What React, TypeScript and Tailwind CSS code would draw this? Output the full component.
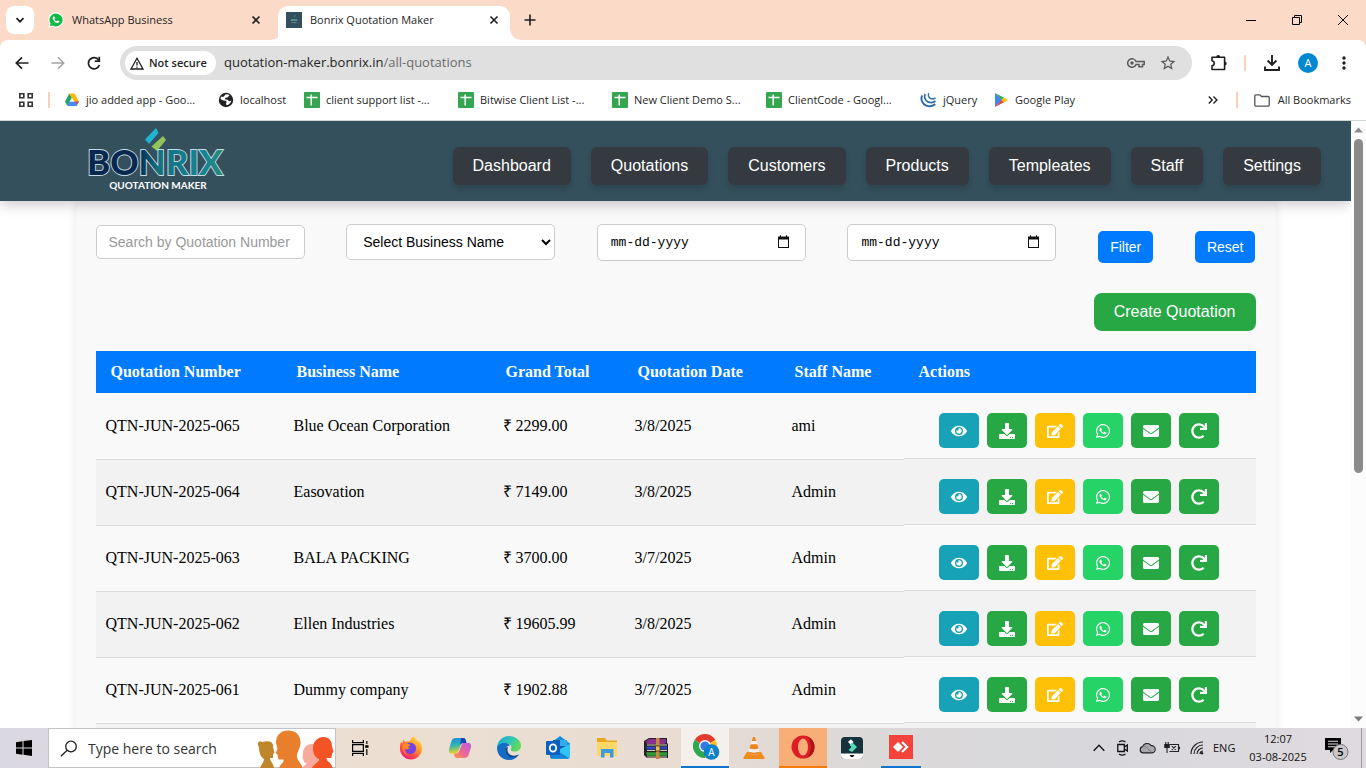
import React from "react";
import { FaEye, FaDownload, FaEdit, FaWhatsapp, FaEnvelope, FaRedo } from "react-icons/fa";
import { MdStarBorder, MdMoreVert } from "react-icons/md";

const uiFont = "font-['Open_Sans','Noto_Sans',sans-serif]";

/* ---------- Browser chrome icons ---------- */

function WhatsAppBadge() {
  return (
    <svg width="16" height="16" viewBox="0 0 16 16" aria-hidden="true">
      <path d="M8 .3A7.6 7.6 0 0 0 1.5 11.9L.3 15.7l4-1.1A7.6 7.6 0 1 0 8 .3z" fill="#fff" />
      <path d="M8 1.4a6.5 6.5 0 0 0-5.4 10.1l-.8 2.7 2.8-.8A6.5 6.5 0 1 0 8 1.4z" fill="#12b848" />
      <path d="M5.6 4.4c.3-.2.7-.1.8.2l.6 1.4-.6.9c.5 1.1 1.2 1.8 2.4 2.4l.8-.8 1.7.8c.3 1.1-.9 1.8-1.9 1.7C6.900 10.600 4.800 8.200 4.700 6.200c0-.7.4-1.400.9-1.800z" fill="#fff" />
    </svg>
  );
}

function SiteBadge() {
  return (
    <svg width="16" height="16" viewBox="0 0 16 16" aria-hidden="true">
      <rect width="16" height="16" fill="#34505d" />
      <path d="M8 4.500l1.500-1M5 7.500h6" stroke="#3f9aa5" strokeWidth="1" />
      <path d="M4.500 8.500h7M5.500 10.500h5" stroke="#6f909b" strokeWidth=".8" />
    </svg>
  );
}

function CloseIcon() {
  return (
    <svg width="10" height="10" viewBox="0 0 10 10" aria-hidden="true">
      <path d="M1.500 1.500l7 7M8.500 1.500l-7 7" stroke="#1f1f1f" strokeWidth="1.600" />
    </svg>
  );
}

function DriveIcon() {
  return (
    <svg width="16" height="16" viewBox="0 0 16 16" aria-hidden="true">
      <path d="M5.400 1.500L1 9.500l2.200 4.300 4.800-8.300z" fill="#1fa463" />
      <path d="M5.400 1.500h5.200L15 9.500h-5z" fill="#ffba00" />
      <path d="M5.400 9.500H15l-2.300 4.500H3.200z" fill="#4688f4" />
      <path d="M10.500 9.500H15l-1.500 2.800z" fill="#ea4335" />
      <path d="M8 6.200l2 3.300H6z" fill="#fff" />
    </svg>
  );
}

function GlobeIcon() {
  return (
    <svg width="16" height="16" viewBox="0 0 16 16" aria-hidden="true">
      <circle cx="8" cy="8" r="7.200" fill="#202124" />
      <path d="M7.500 2.500c1.500-.6 3 0 4 .8L9.500 5.500l-2 .3-.8 1.400 2.800.5 1.600 1.600c1 0 1.700-.2 2.300-.8-.4 2.300-2.400 4.400-4.700 4.700l-.9-1.700 1-1.300-1-1.400-2.500-.3L2.500 7c0-1 .5-2 1-2.500l1.700.5z" fill="#fff" />
    </svg>
  );
}

function SheetIcon() {
  return (
    <svg width="16" height="16" viewBox="0 0 16 16" aria-hidden="true">
      <rect width="16" height="16" rx="1" fill="#34a550" />
      <path d="M2.500 5.500h11M7.200 2.500v11" stroke="#fff" strokeWidth="1.500" />
    </svg>
  );
}

function JqueryIcon() {
  return (
    <svg width="17" height="16" viewBox="0 0 17 16" fill="none" stroke="#2b6ca8" aria-hidden="true">
      <path d="M2.200 3.500c-2 4 .2 8.500 4 10.100 3 1.200 6.500.7 9-1.600" strokeWidth="1.900" />
      <path d="M5.200 2c-1.500 3-.2 6.500 2.800 7.900 2.500 1.100 5.200.8 7.500-.9" strokeWidth="1.700" />
      <path d="M8.800 1.300c-.8 1.700-.3 4 1.500 5 1.700.9 3.500.8 5.200-.5" strokeWidth="1.500" />
    </svg>
  );
}

function PlayIcon() {
  return (
    <svg width="16" height="16" viewBox="0 0 16 16" aria-hidden="true">
      <path d="M2 1v14l7-7z" fill="#4285f4" />
      <path d="M2 1l9 4.800L8.500 8z" fill="#34a853" />
      <path d="M2 15l9-4.800L8.500 8z" fill="#ea4335" />
      <path d="M11 5.600L15 8l-4 2.400L8.300 8z" fill="#fbbc04" />
    </svg>
  );
}

const bookmarks: { label: string; icon: React.ReactNode; width: string }[] = [
  { label: "jio added app - Goo...", icon: <DriveIcon />, width: "w-[154px]" },
  { label: "localhost", icon: <GlobeIcon />, width: "w-[86px]" },
  { label: "client support list -...", icon: <SheetIcon />, width: "w-[154px]" },
  { label: "Bitwise Client List -...", icon: <SheetIcon />, width: "w-[154px]" },
  { label: "New Client Demo S...", icon: <SheetIcon />, width: "w-[154px]" },
  { label: "ClientCode - Googl...", icon: <SheetIcon />, width: "w-[154px]" },
  { label: "jQuery", icon: <JqueryIcon />, width: "w-[73px]" },
  { label: "Google Play", icon: <PlayIcon />, width: "w-[92px]" },
];

function TabStrip() {
  return (
    <div className="flex h-10 shrink-0 items-end bg-[#fcdac8] text-[#1f1f1f]">
      <button aria-label="Search tabs" className="mb-[6px] ml-[6px] flex h-7 w-7 items-center justify-center rounded-lg bg-white">
        <svg width="10" height="10" viewBox="0 0 10 10" fill="none" stroke="#1f1f1f" strokeWidth="1.700">
          <path d="M1.500 3.200L5 6.700l3.500-3.500" />
        </svg>
      </button>
      <div className="flex h-[34px] w-[238px] items-center gap-2 pb-[6px] pl-[14px] pr-2">
        <WhatsAppBadge />
        <span className="flex-1 text-[11px]">WhatsApp Business</span>
        <button aria-label="Close tab" className="flex h-4 w-4 items-center justify-center">
          <CloseIcon />
        </button>
      </div>
      <div className="h-[10px] w-[10px] bg-[radial-gradient(circle_at_0_0,#fcdac8_9px,#fff_10px)]" />
      <div className="-ml-1 flex h-[34px] w-[232px] items-center gap-2 rounded-t-[10px] bg-white px-2 pb-[6px]">
        <SiteBadge />
        <span className="flex-1 text-[11px]">Bonrix Quotation Maker</span>
        <button aria-label="Close tab" className="flex h-4 w-4 items-center justify-center">
          <CloseIcon />
        </button>
      </div>
      <div className="h-[10px] w-[10px] bg-[radial-gradient(circle_at_100%_0,#fcdac8_9px,#fff_10px)]" />
      <button aria-label="New tab" className="mb-[10px] flex h-5 w-5 items-center justify-center">
        <svg width="12" height="12" viewBox="0 0 12 12" stroke="#1f1f1f" strokeWidth="1.600">
          <path d="M6 .5v11M.5 6h11" />
        </svg>
      </button>
      <div className="ml-auto flex h-10">
        <button aria-label="Minimize" className="flex w-[46px] items-center justify-center">
          <svg width="10" height="10" viewBox="0 0 10 10"><path d="M0 5.500h10" stroke="#000" /></svg>
        </button>
        <button aria-label="Restore" className="flex w-[46px] items-center justify-center">
          <svg width="10" height="10" viewBox="0 0 10 10" fill="none" stroke="#000">
            <path d="M.5 2.500h7v7h-7zM2.500 2.500v-2h7v7h-2" />
          </svg>
        </button>
        <button aria-label="Close" className="flex w-[46px] items-center justify-center">
          <svg width="10" height="10" viewBox="0 0 10 10" stroke="#000"><path d="M0 0l10 10M10 0L0 10" /></svg>
        </button>
      </div>
    </div>
  );
}

function AddressBar() {
  return (
    <div className="flex h-[46px] items-center px-[14px]">
      <button aria-label="Back" className="flex h-4 w-4 items-center justify-center">
        <svg width="14" height="14" viewBox="0 0 14 14" fill="none" stroke="#1f1f1f" strokeWidth="1.700">
          <path d="M13.500 7H1.500M7 1.300L1.300 7 7 12.700" />
        </svg>
      </button>
      <button aria-label="Forward" className="ml-5 flex h-4 w-4 items-center justify-center">
        <svg width="14" height="14" viewBox="0 0 14 14" fill="none" stroke="#a3a3a3" strokeWidth="1.500">
          <path d="M.5 7h12M7 1.300L12.700 7 7 12.700" />
        </svg>
      </button>
      <button aria-label="Reload" className="ml-5 flex h-4 w-4 items-center justify-center">
        <svg width="14" height="14" viewBox="0 0 14 14" fill="none" stroke="#1f1f1f" strokeWidth="1.700">
          <path d="M12.400 9A5.600 5.600 0 1 1 11.700 4.100" />
          <path d="M12.300.7v4.500H7.800" />
        </svg>
      </button>
      <div className="ml-[18px] flex h-[34px] flex-1 items-center rounded-full bg-[#e0e0e0] pl-[5px] pr-[15px]">
        <button className="flex h-6 w-[91px] items-center gap-[5px] rounded-full bg-white pl-[5px] text-[#1f1f1f]">
          <svg width="14" height="13" viewBox="0 0 14 13" fill="none" stroke="#1f1f1f" strokeWidth="1.300">
            <path d="M7 1.300L13 12H1z" />
            <path d="M7 5v3.500M7 9.500v1.300" />
          </svg>
          <span className="text-[11px] font-semibold whitespace-nowrap">Not secure</span>
        </button>
        <div className="ml-2 flex-1 text-[13px] text-[#1f1f1f]">
          quotation-maker.bonrix.in<span className="text-[#6a6a6a]">/all-quotations</span>
        </div>
        <button aria-label="Passwords">
          <svg width="18" height="12" viewBox="0 0 18 12" fill="none" stroke="#5a5a5a" strokeWidth="1.500">
            <path d="M9 4.500A4.300 4.300 0 1 0 9 7.500h3v2.300h3.500V7.500H17.200v-3z" />
            <circle cx="5" cy="6" r="1" fill="#5a5a5a" />
          </svg>
        </button>
        <button aria-label="Bookmark this tab" className="ml-[14px] text-[18px] text-[#555]">
          <MdStarBorder />
        </button>
      </div>
      <button aria-label="Extensions" className="ml-[18px]">
        <svg width="18" height="18" viewBox="0 0 18 18">
          <path d="M2 3.200h12.600v12.300H2v-3.600c3-.6 3-4.500 0-5.100z" fill="none" stroke="#1f1f1f" strokeWidth="1.600" strokeLinejoin="round" />
          <path d="M6.200 3a2 2 0 0 1 4 0zM14.700 7.400a2 2 0 0 1 0 4z" fill="#1f1f1f" />
        </svg>
      </button>
      <div className="ml-4 h-4 w-[2px] rounded bg-[#fcd0b8]" />
      <button aria-label="Downloads" className="ml-[18px]">
        <svg width="16" height="16" viewBox="0 0 16 16" fill="none" stroke="#1f1f1f" strokeWidth="1.900">
          <path d="M8 0v9.500M3.600 5.500L8 9.900l4.400-4.400M1 11.500V15h14v-3.500" />
        </svg>
      </button>
      <button aria-label="Profile" className="ml-[18px] flex h-5 w-5 items-center justify-center rounded-full bg-[#0288d1] text-[11px] text-white">
        A
      </button>
      <button aria-label="Chrome menu" className="-mr-[2px] ml-4 text-[20px] text-[#1f1f1f]">
        <MdMoreVert />
      </button>
    </div>
  );
}

function BookmarksBar() {
  return (
    <nav aria-label="Bookmarks" className="flex h-[34px] items-start pl-[19px] pr-[15px] pt-[6px] text-[11px] leading-4 text-[#1f1f1f]">
      <button aria-label="Apps" className="flex h-4 items-center">
        <svg width="14" height="14" viewBox="0 0 14 14" fill="none" stroke="#333" strokeWidth="1.600">
          <path d="M.8.8h4v4h-4zM9.200.8h4v4h-4zM.8 9.200h4v4h-4zM9.200 9.200h4v4h-4z" />
        </svg>
      </button>
      <div className="ml-[15px] h-4 w-[2px] bg-[#fcd0b8]" />
      <ul className="ml-[14px] flex">
        {bookmarks.map((b) => (
          <li key={b.label} className={b.width + " shrink-0"}>
            <a href="#" className="flex items-center gap-[6px] whitespace-nowrap">
              {b.icon}
              {b.label}
            </a>
          </li>
        ))}
      </ul>
      <button aria-label="More bookmarks" className="ml-auto flex h-4 items-center">
        <svg width="10" height="8" viewBox="0 0 10 8" fill="none" stroke="#1f1f1f" strokeWidth="1.400">
          <path d="M.8.600L4.200 4 .8 7.400M5.500.600L8.900 4 5.500 7.400" />
        </svg>
      </button>
      <div className="ml-[18px] h-4 w-[2px] bg-[#fcd0b8]" />
      <a href="#" className="ml-4 flex items-center gap-2 whitespace-nowrap">
        <svg width="16" height="13" viewBox="0 0 16 13" fill="none" stroke="#555" strokeWidth="1.300">
          <path d="M.8 1.800c0-.6.400-1 1-1h4l1.700 1.700h6.700c.6 0 1 .4 1 1v7.700c0 .6-.4 1-1 1H1.800c-.6 0-1-.4-1-1z" />
        </svg>
        All Bookmarks
      </a>
    </nav>
  );
}

/* ---------- Page ---------- */

function Logo() {
  return (
    <svg width="146" height="66" viewBox="0 0 146 66" role="img" aria-label="Bonrix">
      <defs>
        <linearGradient id="ln" x1="0" y1="0" x2="1" y2="0">
          <stop offset=".38" stopColor="#08284f" />
          <stop offset=".52" stopColor="#14707f" />
          <stop offset=".85" stopColor="#148495" />
          <stop offset="1" stopColor="#2a8c76" />
        </linearGradient>
      </defs>
      <path d="M57 12.500L68 1l2.500 5L61 17z" fill="#1fb5d2" />
      <path d="M63.500 19.500L75 9l3 4L69 24z" fill="#93c45c" />
      <text
        x="-1"
        y="48"
        fontSize="35"
        fontWeight="900"
        fill="url(#ln)"
        stroke="#c5dde6"
        strokeWidth="1.800"
        paintOrder="stroke"
        className="font-['Lato',sans-serif]"
      >
        BONRIX
      </text>
      <text x="70" y="62" textAnchor="middle" fontSize="10" fontWeight="700" fill="#fff" className="font-['Lato',sans-serif]">
        QUOTATION MAKER
      </text>
    </svg>
  );
}

const navItems = ["Dashboard", "Quotations", "Customers", "Products", "Templeates", "Staff", "Settings"];

function SiteHeader() {
  return (
    <header className="relative z-10 flex h-20 items-start justify-between bg-[#34505d] pl-[88px] pr-[30px] shadow-[0_4px_12px_rgba(0,0,0,0.2)]">
      <a href="#" className="mt-[6px]">
        <Logo />
      </a>
      <nav className="mt-[26px] flex gap-5">
        {navItems.map((item) => (
          <a
            key={item}
            href="#"
            className="rounded-md bg-[#343a40] px-5 py-[10px] text-[16px] leading-[18px] text-white shadow-[0_4px_6px_rgba(0,0,0,0.15)]"
          >
            {item}
          </a>
        ))}
      </nav>
    </header>
  );
}

function DateField({ label }: { label: string }) {
  return (
    <div className="flex h-[37px] w-[209px] items-center rounded-[5px] border border-[#ccc] bg-white pl-[13px] pr-[14px]">
      <input
        type="text"
        aria-label={label}
        placeholder="mm-dd-yyyy"
        className="min-w-0 flex-1 bg-transparent pt-[2px] font-['Liberation_Mono',monospace] text-[13px] text-black outline-none placeholder:text-black"
      />
      <button aria-label={"Open calendar: " + label}>
        <svg width="14" height="14" viewBox="0 0 14 14" aria-hidden="true">
          <path d="M1 1.500h11V13H1z" fill="#111" />
          <path d="M2 4.500h9V12H2z" fill="#fff" />
          <path d="M3 .3h1v2H3zM9 .3h1v2H9z" fill="#111" />
        </svg>
      </button>
    </div>
  );
}

const rows = [
  ["QTN-JUN-2025-065", "Blue Ocean Corporation", "₹ 2299.00", "3/8/2025", "ami"],
  ["QTN-JUN-2025-064", "Easovation", "₹ 7149.00", "3/8/2025", "Admin"],
  ["QTN-JUN-2025-063", "BALA PACKING", "₹ 3700.00", "3/7/2025", "Admin"],
  ["QTN-JUN-2025-062", "Ellen Industries", "₹ 19605.99", "3/8/2025", "Admin"],
  ["QTN-JUN-2025-061", "Dummy company", "₹ 1902.88", "3/7/2025", "Admin"],
];

const actions = [
  { label: "View", icon: <FaEye />, color: "bg-[#17a2b8]" },
  { label: "Download", icon: <FaDownload />, color: "bg-[#28a745]" },
  { label: "Edit", icon: <FaEdit />, color: "bg-[#ffc107]" },
  { label: "Send on WhatsApp", icon: <FaWhatsapp />, color: "bg-[#25d366]" },
  { label: "Send by email", icon: <FaEnvelope />, color: "bg-[#28a745]" },
  { label: "Renew", icon: <FaRedo />, color: "bg-[#28a745]" },
];

const columns = [
  { label: "Quotation Number", width: "w-[186px]" },
  { label: "Business Name", width: "w-[209px]" },
  { label: "Grand Total", width: "w-[132px]" },
  { label: "Quotation Date", width: "w-[157px]" },
  { label: "Staff Name", width: "w-[124px]" },
  { label: "Actions", width: "w-auto" },
];

function QuotationTable() {
  return (
    <table className="mt-5 w-full table-fixed border-collapse font-['Liberation_Serif',serif] text-[16px] leading-[18px] text-black">
      <thead>
        <tr className="h-[42px] bg-[#007bff] text-left text-white">
          {columns.map((c) => (
            <th key={c.label} scope="col" className={c.width + " pl-[15px] font-bold"}>
              {c.label}
            </th>
          ))}
        </tr>
      </thead>
      <tbody>
        {rows.map((r) => (
          <tr key={r[0]} className="even:bg-[#f2f2f2]">
            {r.map((cell, i) => (
              <td key={i} className="border-b border-[#ddd] pl-3 align-middle first:pl-[10px]">
                {cell}
              </td>
            ))}
            <td className="p-0 align-top">
              <div className="flex h-[66px] gap-2 border-b border-[#ddd] pl-[35px] pt-5">
                {actions.map((a) => (
                  <button
                    key={a.label}
                    aria-label={a.label}
                    title={a.label}
                    className={a.color + " flex h-[35px] w-10 items-center justify-center rounded-[5px] text-[16px] text-white"}
                  >
                    {a.icon}
                  </button>
                ))}
              </div>
            </td>
          </tr>
        ))}
        <tr className="h-[66px] bg-[#f2f2f2]">
          <td colSpan={6} />
        </tr>
      </tbody>
    </table>
  );
}

function QuotationsPage() {
  return (
    <main className="mx-auto max-w-[1200px] rounded-lg bg-[#f9f9f9] p-5 shadow-[0_0_10px_rgba(0,0,0,0.1)]">
      <form className="flex items-center justify-between text-[14px]" onSubmit={(e) => e.preventDefault()}>
        <input
          type="text"
          aria-label="Quotation number"
          placeholder="Search by Quotation Number"
          className="h-[34px] w-[209px] rounded-[5px] border border-[#ccc] bg-white px-3 outline-none placeholder:text-[#999]"
        />
        <select aria-label="Business name" className="mb-px h-9 w-[209px] rounded-[5px] border border-[#ccc] bg-white pl-3 text-black">
          <option>Select Business Name</option>
        </select>
        <DateField label="From date" />
        <DateField label="To date" />
        <button type="submit" className="mt-[10px] h-8 rounded-[5px] bg-[#007bff] px-3 text-white">Filter</button>
        <button type="reset" className="mt-[10px] h-8 rounded-[5px] bg-[#007bff] px-3 text-white">Reset</button>
      </form>
      <div className="mt-[30px] flex justify-end">
        <button className="rounded-lg bg-[#28a745] px-5 py-[10px] text-[16px] leading-[18px] text-white">
          Create Quotation
        </button>
      </div>
      <QuotationTable />
    </main>
  );
}

function Scrollbar() {
  return (
    <div className="flex w-[15px] shrink-0 flex-col items-center bg-[#fcfcfc] pb-1 pt-[6px]" aria-hidden="true">
      <svg width="9" height="6" viewBox="0 0 9 6"><path d="M0 5.500L4.500.5 9 5.500z" fill="#8b8b8b" /></svg>
      <div className="mt-[6px] h-[334px] w-[9px] rounded-full bg-[#8b8b8b]" />
      <svg width="9" height="6" viewBox="0 0 9 6" className="mt-auto mb-[2px]"><path d="M0 .5L4.500 5.500 9 .5z" fill="#7b7b7b" /></svg>
    </div>
  );
}

/* ---------- Windows taskbar ---------- */

function People() {
  return (
    <svg width="78" height="39" viewBox="0 0 78 39" aria-hidden="true">
      <path d="M1 14c1-2 3-2 4-1 3-1 7-1 9 0 1.500 1 2.500 3 2 5l1.500 6-1.500 1v4h-3c0 4 3 3.500 4 10H3c1-4 4-5 4-9-4-2-5-8-5-12-1-1-1.500-2.500-1-4z" fill="#c0862c" />
      <path d="M19 14C19 6 24 1.500 31 1.500c8 0 13 5 12.500 13-.5 5.500-3.500 8-3.500 13 0 4 3.500 5 5.500 11.500H22c2-5 5-5 4.500-8.500h-5l-1-5-1.800-1.500 1.800-4z" fill="#e97f2d" />
      <path d="M46 25c0-6 3.500-10 9-10 6 0 9 4 8 10-.6 4-2 6-2 9l3 5H45l5-5h-2.500l-.5-3-1.500-1z" fill="#f6ab9c" />
      <path d="M56 19c0-7 5-11 10.500-11C72 8 75 12 75 17l1.500 6-1.500 1.500-.5 4.500h-5c0 4 5 4 6 10H55c1-4 7-5 7-9-4-1-6-6-6-11z" fill="#f35325" />
    </svg>
  );
}

const appIcons: { label: string; slot: string; icon: React.ReactNode }[] = [
  {
    label: "Task View",
    slot: "w-[50px] pr-[2px]",
    icon: (
      <svg width="17" height="16" viewBox="0 0 17 16" fill="none" stroke="#000" strokeWidth="1.200">
        <path d="M.6 0v2.600h10.800V0M.6 16v-2.600h10.800V16M.6 4.600h10.800v6.800H.6zM14.800 1v3M14.800 9v6" />
        <path d="M13.200 5.200h3.300v2.600h-3.300z" fill="#000" stroke="none" />
      </svg>
    ),
  },
  {
    label: "Firefox",
    slot: "w-12",
    icon: (
      <svg width="24" height="24" viewBox="0 0 24 24">
        <defs>
          <linearGradient id="ff" x1=".9" y1="0" x2=".2" y2="1">
            <stop offset="0" stopColor="#fff04a" />
            <stop offset=".4" stopColor="#ff9a2a" />
            <stop offset=".75" stopColor="#ff4050" />
            <stop offset="1" stopColor="#e31587" />
          </linearGradient>
        </defs>
        <path d="M2 6l1.500 1L4 3.500 6.500 6c1.500-.7 3-1 4.500-.6C11.500 3 13 1 15 0c1 3 3 4 4.500 5.500L20 4.500c2 2.500 3 5 3 8A11 11 0 0 1 1 12.500C1 10 1 8 2 6z" fill="url(#ff)" />
        <path d="M7 8.500c2-2.500 6.500-2.500 9 .5 2.500 3.500.5 9-4.500 9C8 18 6.200 15.500 6.500 12c1.500 1 3 1 4.500 0l-2-1.500 3-1.500z" fill="#7542e5" />
        <path d="M4 8.500C6 7 9 7.500 11 9l-2.500 1.500 1.500 2c-2 1.500-4 .5-4.500-.5-1 4 2 7 5.500 7.500-6 .5-9-6-7-11z" fill="#ff8a20" />
      </svg>
    ),
  },
  {
    label: "Copilot",
    slot: "w-12",
    icon: (
      <svg width="24" height="24" viewBox="0 0 24 24">
        <defs>
          <linearGradient id="ca" x1="0" y1="0" x2=".2" y2="1">
            <stop offset="0" stopColor="#1687e0" />
            <stop offset=".5" stopColor="#2fb5b5" />
            <stop offset="1" stopColor="#e5d32a" />
          </linearGradient>
          <linearGradient id="cb" x1="1" y1="0" x2="0" y2="1">
            <stop offset="0" stopColor="#b65be8" />
            <stop offset=".6" stopColor="#f26a8c" />
            <stop offset="1" stopColor="#ff9a45" />
          </linearGradient>
        </defs>
        <path d="M8 2h7c2 0 2.500 1.500 3 3.500l.5 1.500h-3c-2 0-2.600 1-3.200 3L10.500 15c-.6 2-1.500 2.500-3 2.500H4c-3 0-3.500-2-2.800-5L3.500 5C4.300 3 5.500 2 8 2z" fill="url(#ca)" />
        <path d="M13 2h2.500c1.500 0 2.200 1.500 2.600 3.200L18.500 7H15c-1.500 0-2.500 1-3 2z" fill="#1745b8" />
        <path d="M16 22H9c-2 0-2.500-1.500-3-3.500l-.3-1h2.500c2 0 2.700-1 3.300-3l1.800-5c.6-2 1.500-2.500 3-2.500H20c3 0 3.500 2 2.800 5L20.500 19c-.8 2-2 3-4.500 3z" fill="url(#cb)" />
      </svg>
    ),
  },
  {
    label: "Edge",
    slot: "w-12",
    icon: (
      <svg width="24" height="24" viewBox="0 0 24 24">
        <defs>
          <linearGradient id="eg" x1="0" y1="0" x2="1" y2=".4">
            <stop offset="0" stopColor="#1aa5d8" />
            <stop offset=".6" stopColor="#31c7b5" />
            <stop offset="1" stopColor="#62d957" />
          </linearGradient>
        </defs>
        <path d="M0 12C0 5 5.500 0 12 0s12 4.500 12 9.500c0 4-3 6-6.500 6-3 0-4.300-1.200-3.500-2.500 1.500-3-1-5.500-4.500-5.500C5 7.500 1 10 0 12z" fill="url(#eg)" />
        <path d="M0 12c1-4 5-5.500 8.500-5 2 .3 3.700 1 4.500 2.500-4 0-5.500 4-4 7.500 1.700 4 7.500 5.500 13 1.500C20 22 16 24 12 24 5 24 0 18.500 0 12z" fill="#146cc4" />
        <path d="M8.500 12c-1.500 5 2.500 10 8 9.500 2-.3 4-1.500 5.500-3.300-4 2.500-8.500 1.500-10.500-1-1.500-2-1.200-4.500-.5-6.500z" fill="#114a8b" />
      </svg>
    ),
  },
  {
    label: "Outlook",
    slot: "w-12",
    icon: (
      <svg width="24" height="24" viewBox="0 0 24 24">
        <path d="M4 7.500L14 0l10 7.500v4H4z" fill="#1490df" />
        <path d="M7 4h14v11H7z" fill="#0f5cb0" />
        <path d="M14 4h7v6h-7z" fill="#36a9ea" />
        <path d="M24 8v13c0 1-.8 1.700-2 1.700H6c-1 0-2-.7-2-1.700v-3z" fill="#2fc4f3" />
        <path d="M4 21V10l19 12.300c-.4.300-.7.400-1.200.4H6c-1 0-2-.7-2-1.700z" fill="#1683d8" />
        <rect y="5" width="14" height="14" rx="1.200" fill="#0a5fc2" />
        <ellipse cx="7" cy="12" rx="3.200" ry="3.600" fill="none" stroke="#fff" strokeWidth="1.800" />
      </svg>
    ),
  },
  {
    label: "File Explorer",
    slot: "w-12",
    icon: (
      <svg width="22" height="20" viewBox="0 0 22 20">
        <path d="M1 0h8l1.500 2.500H21V17H1z" fill="#e9a720" />
        <path d="M1 4h20v14H1z" fill="#ffd766" />
        <path d="M5 11h12.500v8.500H14V15H8.500v4.500H5z" fill="#3b9be0" />
      </svg>
    ),
  },
  {
    label: "WinRAR",
    slot: "w-12",
    icon: (
      <svg width="24" height="21" viewBox="0 0 24 21">
        <path d="M0 3l5-3h18v5l1 1v14H3l-3-3z" fill="#222" />
        <path d="M1.500 3.500L5 1h17v4l-2 1H3z" fill="#8a2f8f" />
        <path d="M3 6.500h20v1H3zM3 12h20v1H3zM3 18.500h20v1H3z" fill="#d8d0b8" />
        <path d="M2 8.500h21v3H3z" fill="#2c49c0" />
        <path d="M2 14.200h21v3.500H3z" fill="#2f9a3a" />
        <path d="M12 0h3.500v21H12z" fill="#c58a3a" />
        <path d="M11.500 8h4.500v5h-4.500z" fill="#e6c45a" stroke="#4a2d12" strokeWidth=".8" />
      </svg>
    ),
  },
  {
    label: "Chrome",
    slot: "w-12 border-b-2 border-[#0f75cf] bg-[#f6f0ec] pl-[2px]",
    icon: (
      <svg width="27" height="26" viewBox="0 0 27 26">
        <path d="M12 12L1.600 6A12 12 0 0 1 22.400 6z" fill="#e33b2e" />
        <path d="M12 12V24A12 12 0 0 1 1.600 6z" fill="#2da94f" />
        <path d="M12 12L22.400 6A12 12 0 0 1 12 24z" fill="#fcc31e" />
        <circle cx="12" cy="12" r="6" fill="#fff" />
        <circle cx="12" cy="12" r="4.600" fill="#3b78e7" />
        <circle cx="18.500" cy="18" r="7.800" fill="#0d82c9" />
        <text x="18.500" y="21.500" textAnchor="middle" fontSize="10" fill="#fff">A</text>
      </svg>
    ),
  },
  {
    label: "VLC",
    slot: "w-12",
    icon: (
      <svg width="22" height="24" viewBox="0 0 22 24">
        <path d="M4 16h14l3.500 5.500c.3.700 0 1.500-.8 1.500H1.300c-.8 0-1.100-.8-.8-1.500z" fill="#f08a1c" />
        <path d="M10 1h2l5 16c-2.500 2.300-9.500 2.300-12 0z" fill="#f4f0ec" />
        <path d="M10 1h2l1.200 4H8.800zM7.800 8.200h6.400l1.400 4.300c-2.500 1.100-6.700 1.100-9.200 0zM5.500 15.500c3 1.500 8 1.500 11 0l.5 1.500c-2.500 2.300-9.500 2.300-12 0z" fill="#ee8420" />
      </svg>
    ),
  },
  {
    label: "Opera",
    slot: "w-12 border-b-2 border-[#f77b0c] bg-[#f8ae77]",
    icon: (
      <svg width="24" height="24" viewBox="0 0 24 24">
        <circle cx="12" cy="12" r="11.500" fill="#dc1f26" />
        <path d="M16 1.200A11.500 11.500 0 0 1 16 22.800C21 18 21 6 16 1.200z" fill="#b01218" />
        <ellipse cx="12" cy="12" rx="5" ry="8.600" fill="#f8ae77" />
      </svg>
    ),
  },
  {
    label: "Filmora",
    slot: "w-12",
    icon: (
      <svg width="22" height="22" viewBox="0 0 22 22">
        <rect width="22" height="22" rx="4" fill="#15323d" />
        <path d="M0 16.500h22V18a4 4 0 0 1-4 4H4a4 4 0 0 1-4-4z" fill="#fff" />
        <path d="M7 5l2.800-2.800L12.600 5 9.800 7.800z" fill="#fff" />
        <path d="M7.500 13l3-3-2-2L11.500 5.500l4.500 4.500-5 5z" fill="#54dcb8" />
        <path d="M8.500 18h5l-1.500 2h-2z" fill="#111" />
      </svg>
    ),
  },
  {
    label: "AnyDesk",
    slot: "w-12",
    icon: (
      <svg width="24" height="24" viewBox="0 0 24 24">
        <rect width="24" height="24" fill="#f4433a" />
        <path d="M4 12l5-5 5 5-5 5z" fill="#fff" />
        <path d="M13 7l5 5-5 5" fill="none" stroke="#fff" strokeWidth="2.200" />
      </svg>
    ),
  },
];

function Taskbar() {
  return (
    <footer className="flex h-10 shrink-0 items-stretch bg-[linear-gradient(90deg,#dad8e3_0%,#dcd8e0_4%,#ecdfd2_26%,#e9dcd2_48%,#dcd9d8_62%,#d8d8dc_80%,#dfdadf_100%)] text-[#111]">
      <button aria-label="Start" className="flex w-12 items-center justify-center">
        <svg width="16" height="16" viewBox="0 0 16 16">
          <path d="M0 2.200L6.500 1.300v6.200H0zM7.500 1.100L16 0v7.500H7.500zM0 8.500h6.500v6.200L0 13.800zM7.500 8.500H16V16l-8.500-1.200z" />
        </svg>
      </button>
      <div className="flex w-[288px] items-center border border-[#c4c2c6] bg-white pl-[11px]">
        <svg width="18" height="17" viewBox="0 0 18 17" fill="none" stroke="#222" strokeWidth="1.300">
          <circle cx="11" cy="6.500" r="5.300" />
          <path d="M7.200 10.200L.8 16.300" />
        </svg>
        <input
          type="text"
          aria-label="Search"
          placeholder="Type here to search"
          className="ml-[10px] min-w-0 flex-1 bg-transparent text-[14px] outline-none placeholder:text-[#333]"
        />
        <People />
      </div>
      <div className="flex gap-px">
        {appIcons.map((a) => (
          <button
            key={a.label}
            aria-label={a.label}
            className={a.slot + " flex flex-col items-center justify-center"}
          >
            {a.label === "AnyDesk" ? (
              <span className="flex h-full w-10 items-center justify-center border-b-2 border-[#0f75cf]">{a.icon}</span>
            ) : (
              a.icon
            )}
          </button>
        ))}
      </div>
      <div className="ml-auto flex items-center">
        <svg width="12" height="8" viewBox="0 0 12 8" fill="none" stroke="#111" strokeWidth="1.300"><path d="M.7 6.800L6 1.300l5.300 5.500" /></svg>
        <svg width="12" height="16" viewBox="0 0 12 16" fill="none" stroke="#111" strokeWidth="1.300" className="ml-3">
          <path d="M.8 4.500h6.500v7H.8zM7.300 7l3-2v6l-3-2M2 2c2-1.300 4.500-1.300 6.500 0M2 14c2 1.300 4.500 1.300 6.500 0" />
        </svg>
        <svg width="17" height="12" viewBox="0 0 17 12" className="ml-[10px]">
          <path d="M4 10.900a3.200 3.200 0 0 1-.3-6.300 4.800 4.800 0 0 1 8.500-.9 3.600 3.600 0 0 1 .8 7.200z" fill="#a9a9ad" stroke="#222" strokeWidth="1.100" />
          <path d="M3.500 4.600c3-.8 4.500 1 9 5.800" fill="none" stroke="#777" />
        </svg>
        <svg width="17" height="12" viewBox="0 0 17 12" fill="none" stroke="#222" strokeWidth="1.100" className="ml-2">
          <path d="M5.500 2.500h9v7h-9M15.500 4.800v2.400M7.800 4.200l4 3.600M11.800 4.200l-4 3.600M1.800 0v2.500M4.200 0v2.500M3 5.500V11" />
          <path d="M.8 2.500h4.400v3H.8z" fill="#222" />
        </svg>
        <svg width="14" height="14" viewBox="0 0 14 14" fill="none" stroke="#222" strokeWidth="1.200" className="ml-[9px]">
          <path d="M1 13A12 12 0 0 1 13 1M4 13a9 9 0 0 1 9-9M7 13a6 6 0 0 1 6-6M10 13a3 3 0 0 1 3-3" />
          <circle cx="12" cy="12.300" r="1.200" fill="#222" stroke="none" />
        </svg>
        <span className="ml-[9px] w-6 text-[11px]">ENG</span>
        <div className="ml-[11px] w-[60px] text-center text-[11px] leading-[18px] whitespace-nowrap">
          12:07
          <br />
          03-08-2025
        </div>
        <button aria-label="Notifications" className="ml-4 mr-[11px]">
          <svg width="26" height="26" viewBox="0 0 26 26">
            <path d="M1 3h16v12H9l-3 3v-3H1z" fill="#000" />
            <path d="M4 6.300h10M4 9h10M4 11.700h7" stroke="#e4e0e4" strokeWidth="1.100" />
            <circle cx="16.500" cy="17" r="7.500" fill="#c9c7ca" stroke="#777" />
            <text x="16.500" y="21" textAnchor="middle" fontSize="11" fontWeight="600">5</text>
          </svg>
        </button>
        <div className="h-10 w-[5px] border-l border-[#a09ca4]" />
      </div>
    </footer>
  );
}

export default function App() {
  return (
    <div className={uiFont + " flex h-screen flex-col overflow-hidden bg-[#fcdac8]"}>
      <TabStrip />
      <div className="shrink-0 rounded-t-lg border-b border-[#cfd4d4] bg-white">
        <AddressBar />
        <BookmarksBar />
      </div>
      <div className="flex min-h-0 flex-1 bg-white font-['Liberation_Sans',sans-serif]">
        <div className="min-w-0 flex-1 overflow-hidden">
          <SiteHeader />
          <QuotationsPage />
        </div>
        <Scrollbar />
      </div>
      <Taskbar />
    </div>
  );
}
